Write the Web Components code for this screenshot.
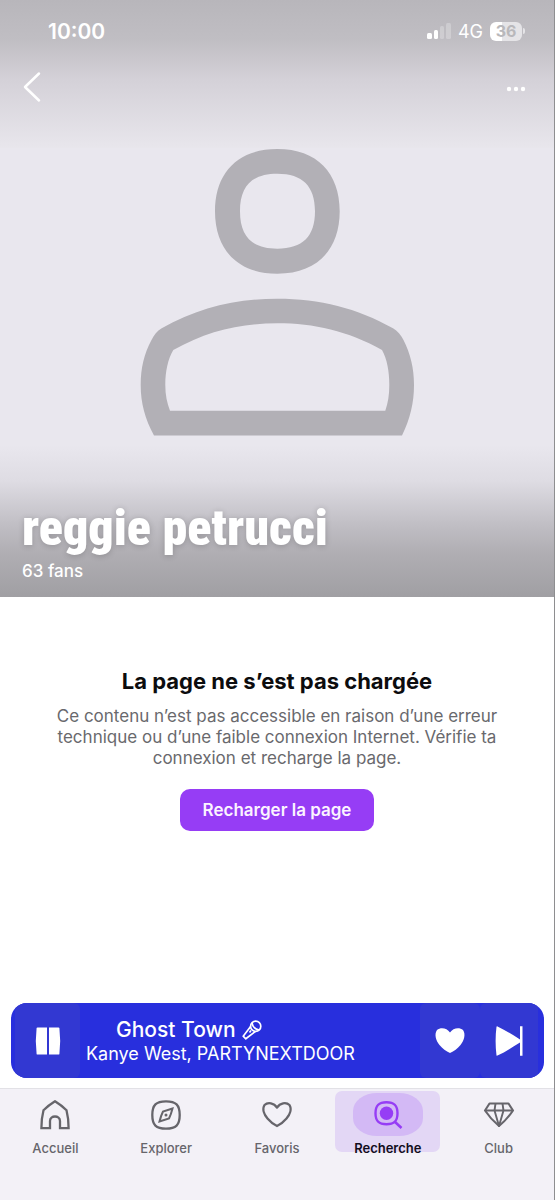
<!DOCTYPE html>
<html lang="fr">
<head>
<meta charset="utf-8">
<meta name="viewport" content="width=device-width, initial-scale=1">
<title>reggie petrucci</title>
<style>
	body {
		margin: 0;
		background: #fff;
		font-family: Inter, "Liberation Sans", sans-serif;
	}
</style>
</head>
<body>
<artist-page>
	<artist-hero slot="hero" name="reggie petrucci" fans="63 fans">
		<status-bar slot="status" time="10:00" network="4G" battery="36"></status-bar>
	</artist-hero>

	<error-message heading="La page ne s’est pas chargée" action="Recharger la page">
		Ce contenu n’est pas accessible en raison d’une erreur technique ou d’une faible connexion Internet. Vérifie ta connexion et recharge la page.
	</error-message>

	<mini-player slot="player" track="Ghost Town" artist="Kanye West, PARTYNEXTDOOR"></mini-player>

	<tab-bar slot="tabs">
		<tab-item label="Accueil">
			<svg width="32" height="32" viewBox="0 0 32 32" fill="none" stroke="currentColor" stroke-width="2.3">
				<path d="M16 2.3C12 4.8 8 7.800 4.500 11.200C3 17 2.400 23 2.400 29.200H11V22C11 16 21 16 21 22V29.200H29.600C29.600 23 29 17 27.500 11.200C24 7.800 20 4.800 16 2.300Z"/>
			</svg>
		</tab-item>
		<tab-item label="Explorer">
			<svg width="32" height="32" viewBox="0 0 32 32" fill="none" stroke="currentColor" stroke-width="2.3">
				<path d="M16 2.3C26 2.3 29.7 6 29.7 16S26 29.7 16 29.7S2.3 26 2.3 16S6 2.3 16 2.3Z"/>
				<path d="M22.5 9.5L13 12.5C11.5 15.5 10.5 18.5 9.5 22.5L19 19.5C20.5 16.5 21.5 13.5 22.5 9.5Z" stroke-width="2"/>
				<circle cx="16" cy="16" r="1.5" fill="currentColor" stroke="none"/>
			</svg>
		</tab-item>
		<tab-item label="Favoris">
			<svg width="32" height="32" viewBox="0 0 32 32" fill="none" stroke="currentColor" stroke-width="2.3" stroke-linejoin="round">
				<path d="M16 8.500C19 4 25 2.600 28.500 6C31 10 29 15.500 25.500 19.500C22.500 23 19.500 25.500 16 27C12.500 25.500 9.500 23 6.500 19.500C3 15.500 1 10 3.500 6C7 2.600 13 4 16 8.500Z"/>
			</svg>
		</tab-item>
		<tab-item label="Recherche" selected>
			<svg width="32" height="32" viewBox="0 0 32 32" fill="none" stroke="currentColor" stroke-width="2.4">
				<path d="M14.5 3.2C22.5 3.2 25.5 6.5 25.5 14.2S22.5 25.2 14.5 25.2S3.5 21.9 3.5 14.2S6.5 3.2 14.5 3.2Z"/>
				<circle cx="14.5" cy="14.2" r="6.7" fill="currentColor" stroke="none"/>
				<path d="M22.5 22.5L29.5 29" stroke-width="2.6"/>
			</svg>
		</tab-item>
		<tab-item label="Club">
			<svg width="32" height="32" viewBox="0 0 32 32" fill="none" stroke="currentColor" stroke-width="2.1" stroke-linejoin="round">
				<path d="M6.5 4.500H25.500L30 11.500C26 17.500 21.500 22.500 16 27C10.500 22.500 6 17.500 2 11.500Z"/>
				<path d="M2 11.500H30M12.500 4.500L11.500 11.500L16 27L20.500 11.500L19.500 4.500" stroke-width="1.900"/>
			</svg>
		</tab-item>
	</tab-bar>
</artist-page>

<script>
	class ArtistPage extends HTMLElement {
		constructor() {
			super();
			this.attachShadow({ mode: "open" });
			this.shadowRoot.innerHTML = `
				<style>
					:host {
						display: flex;
						flex-direction: column;
						box-sizing: border-box;
						min-height: 100vh;
						border-right: 1px solid #8e8e90;
						background: #fff;
					}

					main {
						flex: 1;
					}
				</style>

				<slot name="hero"></slot>
				<main><slot></slot></main>
				<slot name="player"></slot>
				<slot name="tabs"></slot>
			`;
		}
	}

	class StatusBar extends HTMLElement {
		constructor() {
			super();
			this.attachShadow({ mode: "open" });
			this.shadowRoot.innerHTML = `
				<style>
					:host {
						display: flex;
						align-items: center;
						justify-content: space-between;
						height: 62px;
						padding: 0 29px 0 48px;
						color: #fff;
					}

					.time {
						font-size: 21px;
						font-weight: 600;
					}

					.indicators {
						display: flex;
						align-items: center;
						gap: 7px;
						font-size: 18px;
					}

					.battery {
						display: flex;
						align-items: center;
						gap: 1px;
					}

					.level {
						width: 32px;
						border-radius: 6px;
						background: linear-gradient(90deg, #fff 36%, #e5e4e7 36%);
						color: #b9b8bb;
						font-size: 16px;
						font-weight: 700;
						line-height: 19px;
						text-align: center;
					}

					.tip {
						width: 2px;
						height: 6px;
						border-radius: 0 2px 2px 0;
						background: #e5e4e7;
					}
				</style>

				<span class="time"></span>
				<div class="indicators">
					<svg width="25" height="18" viewBox="0 0 25 18" fill="#fff">
						<rect x="1" y="11" width="5" height="6" rx="1.5"/>
						<rect x="8" y="8" width="4" height="9" rx="1.5"/>
						<rect x="14" y="4" width="4" height="13" rx="1.5" opacity=".25"/>
						<rect x="20" y="1" width="5" height="16" rx="1.5" opacity=".25"/>
					</svg>
					<span class="network"></span>
					<div class="battery">
						<span class="level"></span>
						<span class="tip"></span>
					</div>
				</div>
			`;
		}

		connectedCallback() {
			this.shadowRoot.querySelector(".time").textContent = this.getAttribute("time");
			this.shadowRoot.querySelector(".network").textContent = this.getAttribute("network");
			this.shadowRoot.querySelector(".level").textContent = this.getAttribute("battery");
		}
	}

	class ArtistHero extends HTMLElement {
		constructor() {
			super();
			this.attachShadow({ mode: "open" });
			this.shadowRoot.innerHTML = `
				<style>
					:host {
						display: flex;
						flex-direction: column;
						padding-bottom: 13px;
						background:
							linear-gradient(#b8b6bb, #c0bec3 40px, #d4d1d8 80px, #e8e6ec 148px, transparent 148px),
							linear-gradient(to top, #a09fa3, #b0aeb3 44px, #c0bec4 72px, #dedce3 116px, #e9e7ee 152px);
						color: #fff;
					}

					nav {
						display: flex;
						align-items: center;
						justify-content: space-between;
						height: 50px;
						padding: 0 20px;
					}

					button {
						display: flex;
						padding: 0;
						border: 0;
						background: none;
						color: inherit;
						cursor: pointer;
					}

					.avatar {
						align-self: center;
						margin: 37px 0 64px;
					}

					h1,
					p {
						margin: 0;
						padding: 0 22px;
					}

					h1 {
						margin-bottom: 3px;
						font-family: "Roboto Condensed", "Liberation Sans Narrow", "Open Sans", sans-serif;
						font-size: 50px;
						font-weight: 900;
						line-height: 56px;
						text-shadow: 0 1px 6px rgb(0 0 0 / 20%);
					}

					p {
						font-size: 17px;
						font-weight: 500;
						line-height: 25px;
					}
				</style>

				<slot name="status"></slot>
				<nav>
					<button type="button" aria-label="Retour">
						<svg width="24" height="32" viewBox="0 0 24 32" fill="none" stroke="#fff" stroke-width="2.5" stroke-linecap="round" stroke-linejoin="round">
							<path d="M19 2.500L5 16L19 29.500"/>
						</svg>
					</button>
					<button type="button" aria-label="Plus d’options">
						<svg width="36" height="28" viewBox="0 0 36 28" fill="#fff">
							<circle cx="11" cy="16" r="2.2"/>
							<circle cx="18" cy="16" r="2.2"/>
							<circle cx="25" cy="16" r="2.2"/>
						</svg>
					</button>
				</nav>
				<svg class="avatar" width="274" height="287" viewBox="0 0 274 287" fill="#b2b0b6" fill-rule="evenodd">
					<path d="M137.3 0C177 0 199.7 24 199.7 62.3S177 124.7 137.3 124.7S75 100.7 75 62.3S97.6 0 137.3 0ZM137.3 24.7C112 24.7 100 37 100 62.3S112 99.7 137.3 99.7S175 87.5 175 62.3S162.600 24.7 137.3 24.7Z"/>
					<path d="M137.3 149.7C95 149.7 58 159 21.7 179.3C17 182 14 186 11.5 191C4 205 .7 219 .7 236C.7 254 5 270 14 286.5H262C270 270 274 254 274 236C274 219 270.5 205 263.5 191C261 186 257.5 182 253 179.3C217 159 180 149.7 137.3 149.7ZM137.3 174.3C100 174.3 67 182 33.3 201C28 210 25.3 222 25.3 236C25.3 246 27 254 30 261.7H245.3C248 254 249.3 246 249.3 236C249.3 222 247 210 242 201C208 182 174 174.3 137.3 174.3Z"/>
				</svg>
				<h1></h1>
				<p></p>
			`;
		}

		connectedCallback() {
			this.shadowRoot.querySelector("h1").textContent = this.getAttribute("name");
			this.shadowRoot.querySelector("p").textContent = this.getAttribute("fans");
		}
	}

	class ErrorMessage extends HTMLElement {
		constructor() {
			super();
			this.attachShadow({ mode: "open" });
			this.shadowRoot.innerHTML = `
				<style>
					:host {
						display: flex;
						flex-direction: column;
						align-items: center;
						padding: 70px 48px 32px;
						text-align: center;
					}

					h2 {
						margin: 0 0 11px;
						color: #0c0c0e;
						font-size: 22px;
						font-weight: 700;
						line-height: 28px;
					}

					p {
						margin: 0 0 20px;
						color: #69696d;
						font-size: 17px;
						line-height: 21px;
					}

					button {
						padding: 0 23px;
						border: 0;
						border-radius: 10px;
						background: #963df5;
						color: #fbf3ff;
						font: 600 17px/42px Inter, "Liberation Sans", sans-serif;
						cursor: pointer;
					}
				</style>

				<h2></h2>
				<p><slot></slot></p>
				<button type="button"></button>
			`;

			this.shadowRoot.querySelector("button").addEventListener("click", () => {
				this.dispatchEvent(new CustomEvent("reload", { bubbles: true, composed: true }));
			});
		}

		connectedCallback() {
			this.shadowRoot.querySelector("h2").textContent = this.getAttribute("heading");
			this.shadowRoot.querySelector("button").textContent = this.getAttribute("action");
		}
	}

	class MiniPlayer extends HTMLElement {
		constructor() {
			super();
			this.attachShadow({ mode: "open" });
			this.shadowRoot.innerHTML = `
				<style>
					:host {
						display: grid;
						grid-template-columns: 65px 1fr 60px 58px;
						height: 75px;
						margin: 0 10px 10px 11px;
						padding: 0 6px 0 4px;
						overflow: hidden;
						border-radius: 16px;
						background: #282fdd;
						color: #fff;
					}

					button {
						display: flex;
						align-items: center;
						justify-content: center;
						padding: 0;
						border: 0;
						border-radius: 6px;
						background: #3238d2;
						color: inherit;
						cursor: pointer;
					}

					.info {
						display: flex;
						flex-direction: column;
						justify-content: center;
						min-width: 0;
						padding: 2px 6px 0;
						white-space: nowrap;
					}

					.title {
						display: flex;
						align-items: center;
						gap: 6px;
						padding-left: 30px;
						font-size: 21px;
						font-weight: 500;
						line-height: 25px;
					}

					.artist {
						font-size: 18px;
						line-height: 24px;
					}
				</style>

				<button type="button" aria-label="Pause">
					<svg width="26" height="28" viewBox="0 0 26 28" fill="#fff">
						<path d="M2.500 .5H12V27.5H2.500Q1.700 27.5 1.600 27Q0 14 1.600 1Q1.700 .5 2.500 .5ZM14 .5H23.500Q24.300 .5 24.400 1Q26 14 24.400 27Q24.300 27.5 23.500 27.5H14Z"/>
					</svg>
				</button>
				<div class="info">
					<div class="title">
						<span></span>
						<svg width="20" height="20" viewBox="0 0 20 20" fill="none" stroke="#fff" stroke-width="1.7" stroke-linejoin="round">
							<circle cx="13.7" cy="6.3" r="5.1"/>
							<path d="M8.6 6.5L1.2 16.2L3.8 18.8L13.5 11.4M10 2.8C10.5 6.5 13.5 9.5 17.2 10M9 10.5L7.5 12.5"/>
						</svg>
					</div>
					<div class="artist"></div>
				</div>
				<button type="button" aria-label="Ajouter aux favoris">
					<svg width="32" height="28" viewBox="0 0 32 28" fill="#fff">
						<path d="M16 5.500C19 .800 25.500 0 29 3C32 7.500 30 13.500 26.500 18C23.500 21.500 20 24.500 16 26C12 24.500 8.500 21.500 5.500 18C2 13.500 0 7.500 3 3C6.500 0 13 .800 16 5.500Z"/>
					</svg>
				</button>
				<button type="button" aria-label="Titre suivant">
					<svg width="28" height="30" viewBox="0 0 28 30" fill="#fff">
						<path d="M1.5 .8C1.600 .2 2 .1 2.500 .4C10 4 17 8.500 25 13.500V.3H27.500V29.700H25V16.500C17 21.500 10 26 2.500 29.600C2 29.900 1.600 29.800 1.500 29.200C.3 20 .3 10 1.500 .8Z"/>
					</svg>
				</button>
			`;
		}

		connectedCallback() {
			this.shadowRoot.querySelector(".title span").textContent = this.getAttribute("track");
			this.shadowRoot.querySelector(".artist").textContent = this.getAttribute("artist");
		}
	}

	class TabBar extends HTMLElement {
		constructor() {
			super();
			this.attachShadow({ mode: "open" });
			this.shadowRoot.innerHTML = `
				<style>
					:host {
						display: block;
						padding: 2px 0 48px;
						border-top: 1px solid #e2e1e6;
						background: #f3f1f7;
					}

					nav {
						display: grid;
						grid-template-columns: repeat(5, 1fr);
					}
				</style>

				<nav><slot></slot></nav>
			`;
		}
	}

	class TabItem extends HTMLElement {
		constructor() {
			super();
			this.attachShadow({ mode: "open" });
			this.shadowRoot.innerHTML = `
				<style>
					:host {
						display: block;
						padding: 0 3px;
						color: #66656b;
					}

					a {
						display: flex;
						flex-direction: column;
						align-items: center;
						gap: 4px;
						height: 61px;
						padding-top: 2px;
						box-sizing: border-box;
						border-radius: 7px;
						color: inherit;
						font-size: 13px;
						font-weight: 500;
						line-height: 16px;
						text-decoration: none;
					}

					.icon {
						display: flex;
						align-items: center;
						justify-content: center;
						width: 70px;
						height: 43px;
						flex: none;
						border-radius: 24px / 18px;
					}

					:host([selected]) a {
						background: #e3d7f5;
						color: #120d1c;
						font-weight: 600;
					}

					:host([selected]) .icon {
						background: #d3b9f5;
						color: #963df5;
					}
				</style>

				<a href="#">
					<span class="icon"><slot></slot></span>
					<span class="label"></span>
				</a>
			`;
		}

		connectedCallback() {
			this.shadowRoot.querySelector(".label").textContent = this.getAttribute("label");
			if (this.hasAttribute("selected")) {
				this.shadowRoot.querySelector("a").setAttribute("aria-current", "page");
			}
		}
	}

	customElements.define("artist-page", ArtistPage);
	customElements.define("status-bar", StatusBar);
	customElements.define("artist-hero", ArtistHero);
	customElements.define("error-message", ErrorMessage);
	customElements.define("mini-player", MiniPlayer);
	customElements.define("tab-bar", TabBar);
	customElements.define("tab-item", TabItem);
</script>
</body>
</html>
